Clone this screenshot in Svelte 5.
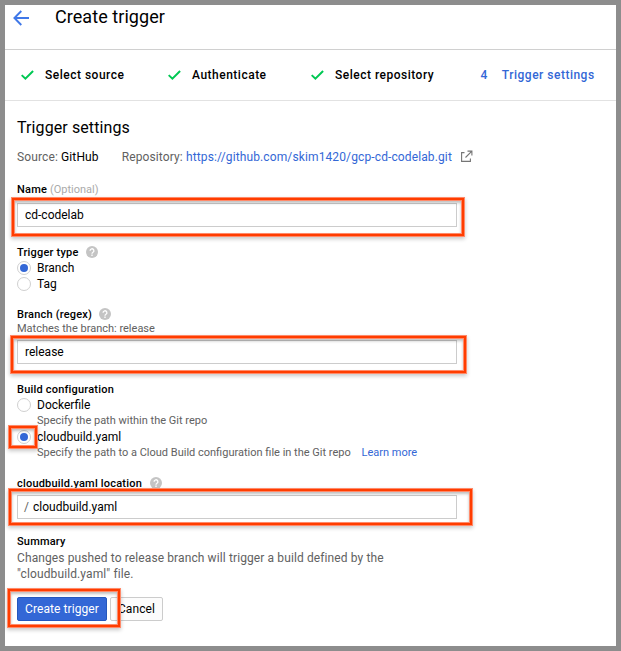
<script>
  const steps = [
    { label: 'Select source', width: 147 },
    { label: 'Authenticate', width: 143 },
    { label: 'Select repository', width: 169 }
  ];
  let name = $state('cd-codelab');
  let branch = $state('release');
  let location = $state('cloudbuild.yaml');
</script>

{#snippet help()}
  <svg class="help" width="12" height="12" viewBox="0 0 12 12">
    <circle cx="6" cy="6" r="6" fill="#c4c4c4" />
    <path d="M4.1 4.8a1.9 1.9 0 1 1 2.9 1.5Q6 6.9 6 7.7M6 8.6v1.3" fill="none" stroke="#fff" stroke-width="1.3" />
  </svg>
{/snippet}

<main>
  <header>
    <svg width="17" height="16" viewBox="0 0 17 16" fill="none" stroke="#4078e8" stroke-width="1.9">
      <path d="M16 8H1.5M8.3 1L1.4 8l6.9 7" />
    </svg>
    <h1>Create trigger</h1>
  </header>

  <nav>
    {#each steps as step}
      <div class="step" style:width="{step.width}px">
        <svg width="14" height="12" viewBox="0 0 14 12"><path d="M1.7 6.1l3.7 3.6L13.1 2" fill="none" stroke="#00c853" stroke-width="2" /></svg>
        <span>{step.label}</span>
      </div>
    {/each}
    <div class="step current"><b>4</b><span>Trigger settings</span></div>
  </nav>

  <form onsubmit={(e) => e.preventDefault()}>
    <h2>Trigger settings</h2>
    <div class="meta">
      <span>Source: <em>GitHub</em></span>
      <span class="repo">Repository: <a href="#repo">https://github.com/skim1420/gcp-cd-codelab.git</a></span>
      <svg width="13" height="13" viewBox="0 0 13 13" fill="none" stroke="#757575" stroke-width="1.1">
        <path d="M4.5 2.6H1.6v8.8h8.8V8.5M5.5 7.5l5.9-5.9M7.5 1.1h4.4V5.5" />
      </svg>
    </div>

    <section class="name">
      <div class="label">Name <i>(Optional)</i></div>
      <div class="field"><input aria-label="Name" bind:value={name} /><div class="mark m-name"></div></div>
    </section>

    <section class="type">
      <div class="label">Trigger type {@render help()}</div>
      <div class="option"><span class="radio on"></span>Branch</div>
      <div class="option"><span class="radio"></span>Tag</div>
    </section>

    <section class="regex">
      <div class="label">Branch (regex) {@render help()}</div>
      <div class="hint">Matches the branch: release</div>
      <div class="field"><input aria-label="Branch" bind:value={branch} /><div class="mark m-branch"></div></div>
    </section>

    <section class="build">
      <div class="label">Build configuration</div>
      <div class="option"><span class="radio"></span>Dockerfile</div>
      <div class="hint inset">Specify the path within the Git repo</div>
      <div class="option"><span class="radio on"></span>cloudbuild.yaml<div class="mark m-radio"></div></div>
      <div class="hint inset">Specify the path to a Cloud Build configuration file in the Git repo <a href="#learn">Learn more</a></div>
    </section>

    <section class="location">
      <div class="label">cloudbuild.yaml location {@render help()}</div>
      <div class="field"><span class="slash">/</span><input aria-label="Location" bind:value={location} /><div class="mark m-location"></div></div>
    </section>

    <section class="summary">
      <div class="label">Summary</div>
      <p>Changes pushed to release branch will trigger a build defined by the "cloudbuild.yaml" file.</p>
    </section>

    <div class="actions">
      <button class="primary">Create trigger</button>
      <button type="button">Cancel</button>
      <div class="mark m-create"></div>
    </div>
  </form>
</main>

<style>
  :global(body) { margin: 0; }
  main {
    box-sizing: border-box;
    width: 621px;
    height: 651px;
    border: 5px solid #8d8d8d;
    background: #fff;
    overflow: hidden;
    color: #000;
    font: 12px/16px Roboto, sans-serif;
  }
  header {
    display: flex;
    align-items: flex-start;
    box-sizing: border-box;
    height: 45px;
    padding-left: 8px;
    border-bottom: 1px solid #d0d0d0;
  }
  header svg { margin-top: 5px; }
  h1 { margin: 0 0 0 25px; font-size: 18px; font-weight: 400; line-height: 24px; letter-spacing: 0.06px; }
  nav {
    display: flex;
    align-items: center;
    box-sizing: border-box;
    height: 51px;
    padding-left: 15px;
    border-bottom: 1px solid #e2e2e2;
  }
  .step {
    display: flex;
    align-items: center;
    gap: 11px;
    font-weight: 500;
    letter-spacing: 0.5px;
    white-space: nowrap;
  }
  .current { gap: 14px; padding-left: 1.5px; color: #3367d6; }
  .current b { font-weight: 500; }
  form { padding: 15px 0 0 12px; }
  h2 { margin: 0; font-size: 16px; font-weight: 400; line-height: 24px; letter-spacing: 0.1px; }
  .meta { display: flex; align-items: center; margin-top: 9px; color: #616161; white-space: nowrap; letter-spacing: 0.12px; }
  .meta em { font-style: normal; color: #000; }
  .repo { margin: 0 8px 0 23px; }
  .meta svg { margin-top: -2px; }
  a { color: #3367d6; text-decoration: none; }
  .label {
    display: flex;
    align-items: center;
    height: 16px;
    font-size: 11px;
    font-weight: 500;
    letter-spacing: 0.2px;
    white-space: pre;
  }
  .label i { font-style: normal; font-weight: 400; letter-spacing: 0; color: #aaa; }
  .help { margin: -2px 0 0 5px; }
  .name { margin-top: 17px; }
  .name .field { margin-top: 5px; }
  .type { margin-top: 18px; }
  .type .label { margin-bottom: -1px; }
  .regex { margin-top: 15px; }
  .regex .help { margin-left: 4px; }
  .regex .hint { margin-top: -2px; height: 16px; }
  .regex .field { margin-top: 3px; }
  .build { margin-top: 18px; }
  .build .label { margin-bottom: -1px; }
  .location { margin-top: 15px; }
  .location .field { margin-top: 3px; }
  .summary { margin-top: 15px; }
  .field {
    position: relative;
    display: flex;
    align-items: center;
    box-sizing: border-box;
    width: 440px;
    height: 24px;
    padding-left: 7px;
    border: 1px solid #ccc;
  }
  .field input {
    flex: 1;
    min-width: 0;
    padding: 0;
    border: 0;
    outline: 0;
    background: transparent;
    color: #000;
    font: inherit;
  }
  .slash { width: 9px; margin-left: -1px; color: #616161; }
  .option { position: relative; display: flex; align-items: center; gap: 6px; height: 16px; }
  .radio {
    display: flex;
    box-sizing: border-box;
    width: 14px;
    height: 14px;
    border: 1px solid #d0d0d0;
    border-radius: 50%;
    background: #fff;
  }
  .on::after { content: ''; width: 8px; height: 8px; margin: 2px; border-radius: 50%; background: #3367d6; }
  .hint { color: #616161; font-size: 11px; line-height: 16px; white-space: nowrap; }
  .inset { padding-left: 20px; height: 16px; line-height: 15px; }
  .inset a { margin-left: 8px; }
  p { width: 385px; margin: 0; color: #616161; letter-spacing: 0.11px; }
  .actions { position: relative; display: flex; gap: 3px; margin-top: 15px; }
  button {
    box-sizing: border-box;
    width: 53px;
    height: 24px;
    padding: 0 0 1px;
    border: 1px solid #ccc;
    border-radius: 2px;
    background: #fcfcfc;
    color: #000;
    font: inherit;
    letter-spacing: 0.08px;
  }
  .primary { width: 90px; border-color: #2457bd; background: #3367d6; color: #fff; }
  /* Callout frames lie over the controls they point at */
  .mark {
    position: absolute;
    box-sizing: border-box;
    border: 1px solid #ff8a6a;
    outline: 2px solid #ff3d00;
    box-shadow: 0 0 0 3px #ff8a6a, 0 2px 4px 3px rgb(0 0 0 / 22%), inset 0 2px 3px rgb(0 0 0 / 25%);
    pointer-events: none;
  }
  .m-name { left: -4px; top: -4px; width: 448px; height: 34px; }
  .m-branch { left: -5px; top: -3px; width: 451px; height: 33px; }
  .m-radio { left: -6px; top: -1px; width: 24px; height: 18px; }
  .m-location { left: -7px; top: -5px; width: 459px; height: 32px; }
  .m-create { left: -7px; top: -6px; width: 108px; height: 34px; }
</style>
